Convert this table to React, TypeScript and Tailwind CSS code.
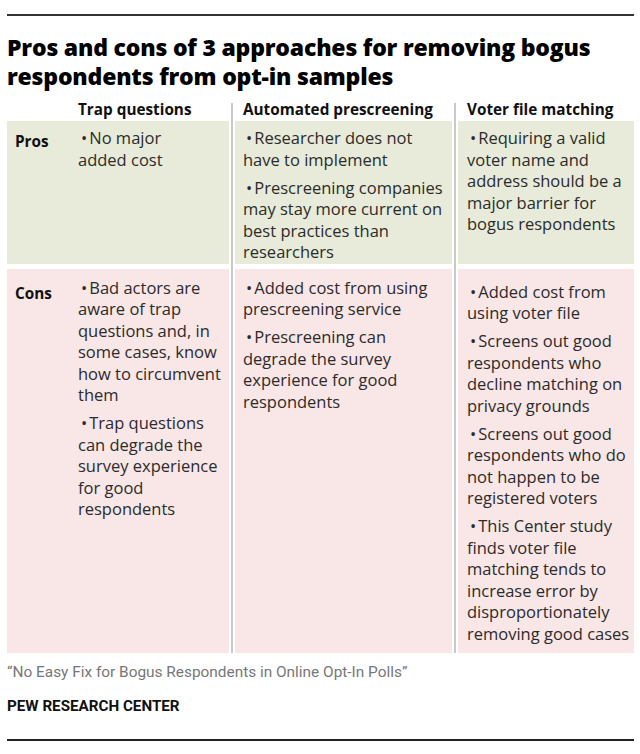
type Cell = string[][];

const HEADERS = ["Trap questions", "Automated prescreening", "Voter file matching"];

const PROS: Cell[] = [
  [["No major", "added cost"]],
  [
    ["Researcher does not", "have to implement"],
    ["Prescreening companies", "may stay more current on", "best practices than", "researchers"],
  ],
  [["Requiring a valid", "voter name and", "address should be a", "major barrier for", "bogus respondents"]],
];

const CONS: Cell[] = [
  [
    ["Bad actors are", "aware of trap", "questions and, in", "some cases, know", "how to circumvent", "them"],
    ["Trap questions", "can degrade the", "survey experience", "for good", "respondents"],
  ],
  [
    ["Added cost from using", "prescreening service"],
    ["Prescreening can", "degrade the survey", "experience for good", "respondents"],
  ],
  [
    ["Added cost from", "using voter file"],
    ["Screens out good", "respondents who", "decline matching on", "privacy grounds"],
    ["Screens out good", "respondents who do", "not happen to be", "registered voters"],
    ["This Center study", "finds voter file", "matching tends to", "increase error by", "disproportionately", "removing good cases"],
  ],
];

const body = "font-['Open_Sans',sans-serif] text-[16.5px] leading-[21.5px] text-[#2b2b2b]";
const bold = "font-['Open_Sans',sans-serif] font-bold text-[15.3px] text-[#111]";

function Bullets({ items }: { items: Cell }) {
  return (
    <div className={`flex flex-col gap-[6.5px] whitespace-nowrap ${body}`}>
      {items.map((lines, i) => (
        <p key={i}>
          <span className="ml-[3px] mr-[2px]">•</span>
          {lines.map((l, j) => (
            <span key={j}>
              {j > 0 && <br />}
              {l}
            </span>
          ))}
        </p>
      ))}
    </div>
  );
}

function Divider({ col }: { col: string }) {
  return (
    <div className={`${col} row-start-1 row-span-4 flex justify-center pt-[6px]`}>
      <div className="w-[2px] bg-[#c9c9c9]" />
    </div>
  );
}

export default function App() {
  return (
    <div className="w-[640px] h-[754px] bg-white pl-[7px] pr-[6px] pt-[14px]">
      <div className="h-[2px] bg-[#333]" />
      <h1 className="mt-[17px] font-['Open_Sans',sans-serif] font-extrabold text-[23px] leading-[29px] text-black tracking-[-0.2px]">
        Pros and cons of 3 approaches for removing bogus
        <br />
        respondents from opt-in samples
      </h1>

      <div className="mt-[6px] grid grid-cols-[222px_6px_217px_6px_176px] grid-rows-[24px_auto_5px_auto]">
        <div className={`col-start-1 row-start-1 pl-[71px] flex items-center ${bold}`}>{HEADERS[0]}</div>
        <div className={`col-start-3 row-start-1 pl-[8px] flex items-center ${bold}`}>{HEADERS[1]}</div>
        <div className={`col-start-5 row-start-1 pl-[9px] flex items-center ${bold}`}>{HEADERS[2]}</div>

        <Divider col="col-start-2" />
        <Divider col="col-start-4" />

        <div className="col-start-1 row-start-2 bg-[#e8ebd9] flex pt-[6px] pb-[1px]">
          <div className={`w-[71px] pl-[8px] pt-[3px] ${bold}`}>Pros</div>
          <Bullets items={PROS[0]} />
        </div>
        <div className="col-start-3 row-start-2 bg-[#e8ebd9] pl-[8px] pt-[6px] pb-[1px]">
          <Bullets items={PROS[1]} />
        </div>
        <div className="col-start-5 row-start-2 bg-[#e8ebd9] pl-[9px] pt-[6px] pb-[1px]">
          <Bullets items={PROS[2]} />
        </div>

        <div className="col-start-1 row-start-4 bg-[#f9e6e6] flex pt-[8px]">
          <div className={`w-[71px] pl-[8px] pt-[5px] ${bold}`}>Cons</div>
          <Bullets items={CONS[0]} />
        </div>
        <div className="col-start-3 row-start-4 bg-[#f9e6e6] pl-[8px] pt-[8px]">
          <Bullets items={CONS[1]} />
        </div>
        <div className="col-start-5 row-start-4 bg-[#f9e6e6] pl-[9px] pt-[12px] pb-[9px]">
          <Bullets items={CONS[2]} />
        </div>
      </div>

      <p className="mt-[9px] font-['Roboto',sans-serif] text-[15.4px] leading-[20px] text-[#777]">
        “No Easy Fix for Bogus Respondents in Online Opt-In Polls”
      </p>
      <p className="mt-[14px] font-['Roboto',sans-serif] font-bold text-[15.2px] leading-[20px] text-[#111]">
        PEW RESEARCH CENTER
      </p>
      <div className="mt-[23px] h-[2px] bg-[#222]" />
    </div>
  );
}
